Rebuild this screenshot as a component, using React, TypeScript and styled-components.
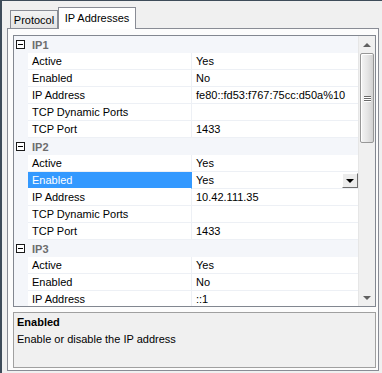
import React from 'react';
import styled, {createGlobalStyle, css} from 'styled-components';

type Property = {name: string, value: string, selected?: boolean};
type Category = {title: string, items: Property[]};

const categories: Category[] = [
    {
        title: 'IP1',
        items: [
            {name: 'Active', value: 'Yes'},
            {name: 'Enabled', value: 'No'},
            {name: 'IP Address', value: 'fe80::fd53:f767:75cc:d50a%10'},
            {name: 'TCP Dynamic Ports', value: ''},
            {name: 'TCP Port', value: '1433'},
        ],
    },
    {
        title: 'IP2',
        items: [
            {name: 'Active', value: 'Yes'},
            {name: 'Enabled', value: 'Yes', selected: true},
            {name: 'IP Address', value: '10.42.111.35'},
            {name: 'TCP Dynamic Ports', value: ''},
            {name: 'TCP Port', value: '1433'},
        ],
    },
    {
        title: 'IP3',
        items: [
            {name: 'Active', value: 'Yes'},
            {name: 'Enabled', value: 'No'},
            {name: 'IP Address', value: '::1'},
            {name: 'TCP Dynamic Ports', value: ''},
            {name: 'TCP Port', value: '1433'},
        ],
    },
];

const GlobalStyle = createGlobalStyle`
    html, body {
        margin: 0;
        padding: 0;
        background: #f0f0f0;
    }
    body {
        font-family: "Liberation Sans", Arial, sans-serif;
        font-size: 11px;
        color: #000;
    }
`;

const Window = styled.div`
    width: 382px;
    height: 373px;
    box-sizing: border-box;
    border-top: 1px solid #3e4c5a;
    border-left: 2px solid #3e4c5a;
    padding: 6px 0 0 5px;
    background: #f0f0f0;
    overflow: hidden;
`;

const TabStrip = styled.div`
    display: flex;
    align-items: flex-end;
    height: 21px;
    padding-left: 3px;
    position: relative;
    z-index: 1;
`;

const Tab = styled.div<{active?: boolean}>`
    box-sizing: border-box;
    display: flex;
    align-items: center;
    justify-content: center;
    border: 1px solid #898c95;
    border-bottom: none;
    height: 18px;
    padding-top: 1px;
    background: linear-gradient(#f3f3f3, #e4e4e4);
    ${({active}) => active && css`
        height: 22px;
        margin-bottom: -1px;
        padding-top: 0;
        padding-bottom: 2px;
        background: #ffffff;
    `}
`;

const Panel = styled.div`
    box-sizing: border-box;
    width: 372px;
    height: 343px;
    border: 1px solid #898c95;
    background: #fcfcfc;
    padding: 6px 2px 1px 5px;
    display: flex;
    flex-direction: column;
    gap: 5px;
`;

const Grid = styled.div`
    box-sizing: border-box;
    width: 363px;
    height: 272px;
    border: 1px solid #828790;
    background: #ffffff;
    display: flex;
`;

const Rows = styled.div`
    flex: 1;
    overflow: hidden;
`;

const Row = styled.div<{category?: boolean}>`
    display: flex;
    height: 17px;
    ${({category}) => category && css`
        background: #f4f6fa;
        align-items: center;
    `}
`;

const Margin = styled.div`
    width: 14px;
    flex: none;
    background: #f4f6fa;
    display: flex;
    align-items: center;
    padding-left: 2px;
    box-sizing: border-box;
`;

const Collapse = styled.div`
    box-sizing: border-box;
    width: 9px;
    height: 9px;
    border: 1px solid #1a1a1a;
    background: #ffffff;
    display: flex;
    align-items: center;
    justify-content: center;
    &::after {
        content: '';
        width: 5px;
        height: 1px;
        background: #000;
    }
`;

const CategoryTitle = styled.span`
    font-weight: bold;
    color: #6d6d6d;
    padding-left: 4px;
`;

const NameCell = styled.div<{selected?: boolean}>`
    box-sizing: border-box;
    width: 163px;
    flex: none;
    padding-left: 4px;
    line-height: 16px;
    border-bottom: 1px solid #edf0f5;
    white-space: nowrap;
    ${({selected}) => selected && css`
        background: #3399ff;
        color: #ffffff;
        border-bottom-color: #ffffff;
    `}
`;

const ValueCell = styled.div<{selected?: boolean}>`
    box-sizing: border-box;
    flex: 1;
    display: flex;
    align-items: center;
    justify-content: space-between;
    padding-left: 4px;
    line-height: 16px;
    border-left: 1px solid #edf0f5;
    border-bottom: 1px solid #edf0f5;
    white-space: nowrap;
    ${({selected}) => selected && css`
        border-left-color: #3399ff;
    `}
`;

const DropButton = styled.div`
    box-sizing: border-box;
    width: 16px;
    height: 15px;
    margin-top: 1px;
    border: 1px solid;
    border-color: #ffffff #6f6f6f #6f6f6f #ffffff;
    background: #ececec;
    display: flex;
    align-items: center;
    justify-content: center;
    &::after {
        content: '';
        border-left: 4px solid transparent;
        border-right: 4px solid transparent;
        border-top: 4px solid #000;
    }
`;

const Scrollbar = styled.div`
    box-sizing: border-box;
    width: 17px;
    flex: none;
    background: #f0f0f0;
    border-left: 1px solid #e6e6e6;
    display: flex;
    flex-direction: column;
`;

const ArrowButton = styled.div<{down?: boolean}>`
    height: 17px;
    flex: none;
    display: flex;
    align-items: center;
    justify-content: center;
    &::after {
        content: '';
        border-left: 4px solid transparent;
        border-right: 4px solid transparent;
        ${({down}) => down
            ? css`border-top: 4px solid #606060;`
            : css`border-bottom: 4px solid #606060;`}
    }
`;

const Track = styled.div`
    flex: 1;
    padding: 0 1px 0 1px;
`;

const Thumb = styled.div`
    box-sizing: border-box;
    height: 90px;
    border: 1px solid #979797;
    border-radius: 2px;
    background: linear-gradient(90deg, #f4f4f4 0%, #e6e6e6 50%, #d2d2d2 100%);
    box-shadow: inset 1px 1px 0 #ffffff;
    display: flex;
    flex-direction: column;
    align-items: center;
    justify-content: center;
    gap: 1px;
`;

const Grip = styled.div`
    width: 7px;
    height: 1px;
    background: #6a6a6a;
    box-shadow: 0 1px 0 #ffffff;
`;

const Description = styled.div`
    box-sizing: border-box;
    width: 363px;
    height: 56px;
    border: 1px solid #a0a0a0;
    background: #f0f0f0;
    padding: 1px 3px;
    line-height: 17px;
`;

const DescTitle = styled.div`
    font-weight: bold;
`;

export default function App() {
    return (
        <Window>
            <GlobalStyle/>
            <TabStrip>
                <Tab style={{width: 48}}>Protocol</Tab>
                <Tab active style={{width: 78}}>IP Addresses</Tab>
            </TabStrip>
            <Panel>
                <Grid>
                    <Rows>
                        {categories.map((category) => (
                            <React.Fragment key={category.title}>
                                <Row category>
                                    <Margin><Collapse/></Margin>
                                    <CategoryTitle>{category.title}</CategoryTitle>
                                </Row>
                                {category.items.map((item) => (
                                    <Row key={item.name}>
                                        <Margin/>
                                        <NameCell selected={item.selected}>{item.name}</NameCell>
                                        <ValueCell selected={item.selected}>
                                            <span>{item.value}</span>
                                            {item.selected && <DropButton/>}
                                        </ValueCell>
                                    </Row>
                                ))}
                            </React.Fragment>
                        ))}
                    </Rows>
                    <Scrollbar>
                        <ArrowButton/>
                        <Track>
                            <Thumb>
                                <Grip/>
                                <Grip/>
                                <Grip/>
                            </Thumb>
                        </Track>
                        <ArrowButton down/>
                    </Scrollbar>
                </Grid>
                <Description>
                    <DescTitle>Enabled</DescTitle>
                    <div>Enable or disable the IP address</div>
                </Description>
            </Panel>
        </Window>
    );
}
